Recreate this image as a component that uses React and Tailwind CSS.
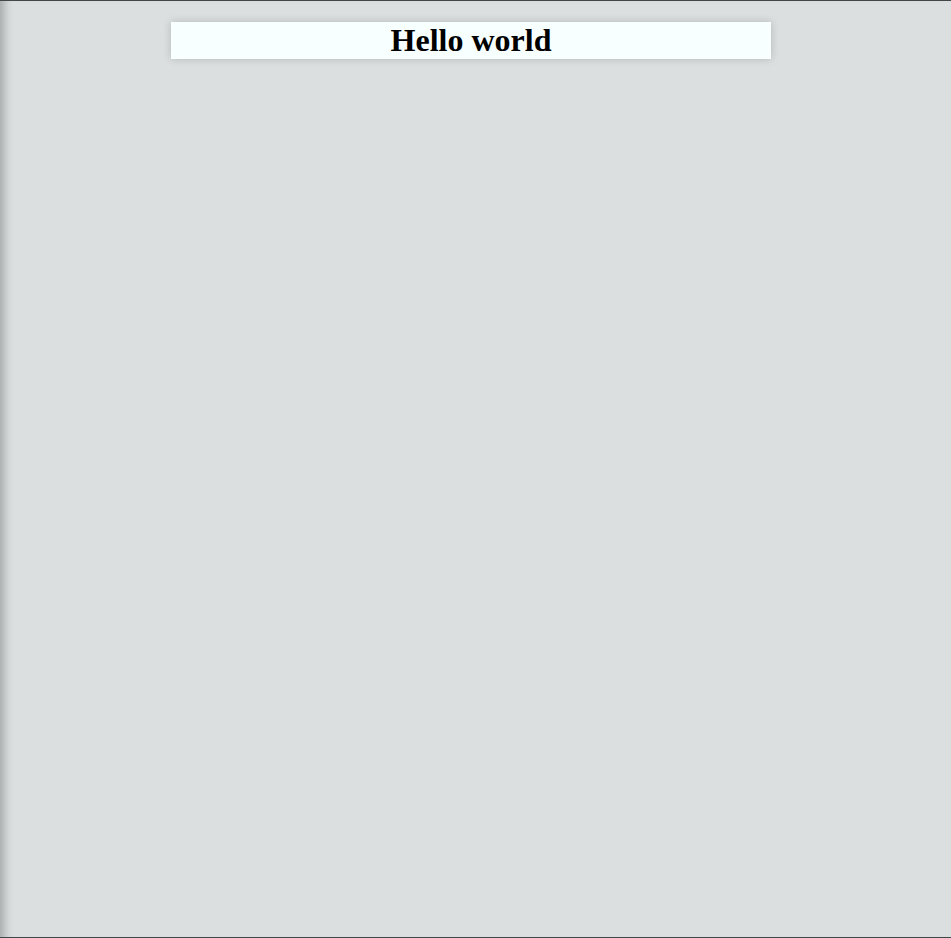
export default function App() {
    return (
        <div className="h-[938px] bg-[#dcdfdf] border-t border-b border-[#444749] shadow-[inset_12px_0_10px_-8px_rgba(0,0,0,0.25)] overflow-hidden">
            <div className="ml-[171px] mt-[21px] w-[600px] bg-[#f8ffff] shadow-[0_0_8px_rgba(0,0,0,0.18)]">
                <h1 className="text-center text-[32px] font-bold leading-[37px] text-black font-['Liberation_Serif',serif]">
                    Hello world
                </h1>
            </div>
        </div>
    );
}
